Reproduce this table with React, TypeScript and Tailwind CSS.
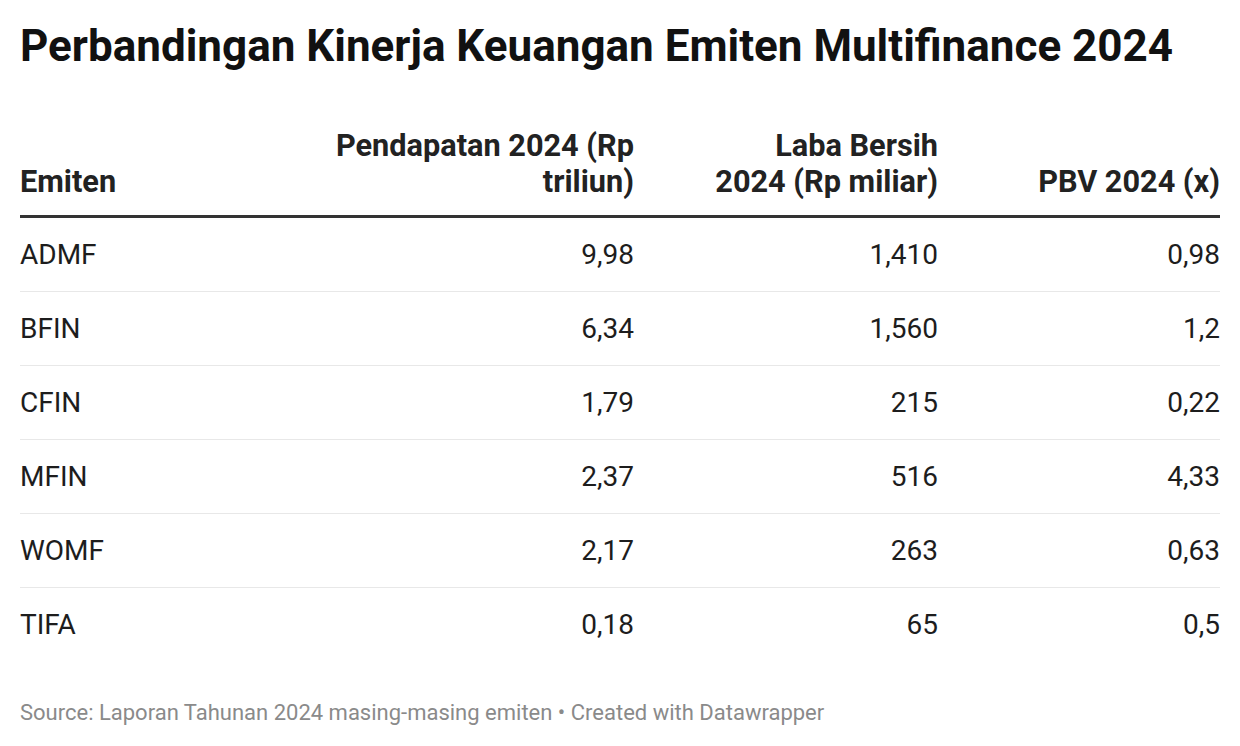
const rows = [
  { name: 'ADMF', rev: '9,98', profit: '1,410', pbv: '0,98' },
  { name: 'BFIN', rev: '6,34', profit: '1,560', pbv: '1,2' },
  { name: 'CFIN', rev: '1,79', profit: '215', pbv: '0,22' },
  { name: 'MFIN', rev: '2,37', profit: '516', pbv: '4,33' },
  { name: 'WOMF', rev: '2,17', profit: '263', pbv: '0,63' },
  { name: 'TIFA', rev: '0,18', profit: '65', pbv: '0,5' },
]

export default function App() {
  return (
    <div className="w-[1240px] h-[746px] bg-white px-[20px] pt-[18px] font-['Roboto',sans-serif] text-[#1d1d1d]">
      <h1 className="text-[44px] leading-[56px] font-bold text-[#111]">
        Perbandingan Kinerja Keuangan Emiten Multifinance 2024
      </h1>

      <div className="mt-[54px] grid grid-cols-[314px_300px_304px_282px] items-end border-b-[3px] border-[#333] pb-[15px] text-[30.7px] leading-[36px] font-bold text-[#222]">
        <div>Emiten</div>
        <div className="text-right">
          Pendapatan 2024 (Rp
          <br />
          triliun)
        </div>
        <div className="text-right">
          Laba Bersih
          <br />
          2024 (Rp miliar)
        </div>
        <div className="text-right">PBV 2024 (x)</div>
      </div>

      <div className="text-[28px]">
        {rows.map((r, i) => (
          <div
            key={r.name}
            className={
              'grid h-[74px] grid-cols-[314px_300px_304px_282px] items-center ' +
              (i < rows.length - 1 ? 'border-b border-[#e8e8e8]' : '')
            }
          >
            <div>{r.name}</div>
            <div className="text-right">{r.rev}</div>
            <div className="text-right">{r.profit}</div>
            <div className="text-right">{r.pbv}</div>
          </div>
        ))}
      </div>

      <p className="mt-[34px] text-[22px] text-[#8a8a8a]">
        Source: Laporan Tahunan 2024 masing-masing emiten • Created with Datawrapper
      </p>
    </div>
  )
}
